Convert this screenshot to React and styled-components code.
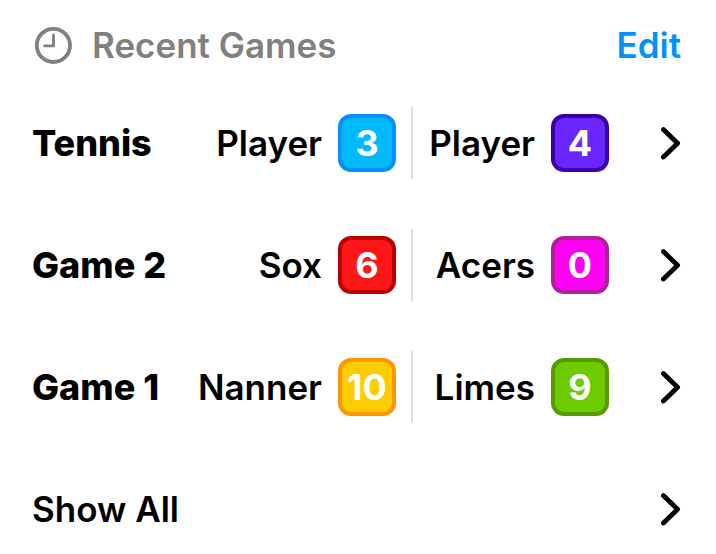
import React from 'react';
import styled, { createGlobalStyle } from 'styled-components';

const games = [
  {
    name: 'Tennis',
    home: { name: 'Player', score: 3, fill: '#00b9ff', edge: '#0091ff' },
    away: { name: 'Player', score: 4, fill: '#6b26ff', edge: '#3700a8' },
  },
  {
    name: 'Game 2',
    home: { name: 'Sox', score: 6, fill: '#ff1717', edge: '#b80000' },
    away: { name: 'Acers', score: 0, fill: '#ff00f2', edge: '#b0209a' },
  },
  {
    name: 'Game 1',
    home: { name: 'Nanner', score: 10, fill: '#ffcc00', edge: '#ff9500' },
    away: { name: 'Limes', score: 9, fill: '#6ecb00', edge: '#559b00' },
  },
];

function ClockIcon() {
  return (
    <svg width="40" height="40" viewBox="0 0 40 40" fill="none" aria-hidden="true">
      <circle cx="21.4" cy="20.4" r="16.6" stroke="currentColor" strokeWidth="3.8" />
      <path
        d="M21.5 9.9V20.9H12.7"
        stroke="currentColor"
        strokeWidth="2.8"
        strokeLinecap="round"
        strokeLinejoin="round"
      />
    </svg>
  );
}

function Chevron() {
  return (
    <svg width="20" height="34" viewBox="0 0 20 34" fill="none" aria-hidden="true">
      <path
        d="M2.4 3.6L16.6 17.3L2.4 31"
        stroke="currentColor"
        strokeWidth="4.8"
        strokeLinecap="round"
        strokeLinejoin="round"
      />
    </svg>
  );
}

function TeamScore({ team }) {
  return (
    <Team>
      {team.name}
      <Score $fill={team.fill} $edge={team.edge}>
        {team.score}
      </Score>
    </Team>
  );
}

function App() {
  return (
    <>
      <GlobalStyle />
      <Page>
        <Header>
          <ClockIcon />
          <Title>Recent Games</Title>
          <EditButton type="button">Edit</EditButton>
        </Header>
        <List>
          {games.map(game => (
            <li key={game.name}>
              <Row type="button">
                <GameName>{game.name}</GameName>
                <Matchup>
                  <TeamScore team={game.home} />
                  <Divider />
                  <TeamScore team={game.away} />
                </Matchup>
                <Chevron />
              </Row>
            </li>
          ))}
          <li>
            <Row type="button">
              Show All
              <Chevron />
            </Row>
          </li>
        </List>
      </Page>
    </>
  );
}

const GlobalStyle = createGlobalStyle`
  * {
    box-sizing: border-box;
  }
  body {
    margin: 0;
    background: #fff;
    color: #000;
    font-family: Inter, 'Liberation Sans', sans-serif;
    font-size: 35px;
    font-weight: 600;
    line-height: 44px;
  }
  button {
    margin: 0;
    padding: 0;
    border: 0;
    background: none;
    color: inherit;
    font: inherit;
    cursor: pointer;
  }
`;

const Page = styled.main`
  padding: 9px 35px 8px 32px;
`;

const Header = styled.header`
  display: flex;
  align-items: center;
  height: 72px;
  margin-bottom: 26px;
  color: #808080;
`;

const Title = styled.h1`
  flex: auto;
  margin: 0 0 0 20px;
  font-size: 35px;
  font-weight: 600;
`;

const EditButton = styled.button`
  && {
    color: #0091ff;
  }
`;

const List = styled.ul`
  display: flex;
  flex-direction: column;
  gap: 50px;
  margin: 0;
  padding: 0;
  list-style: none;
`;

const Row = styled.button`
  && {
    display: flex;
    align-items: center;
    justify-content: space-between;
    width: 100%;
    height: 72px;
    text-align: left;
    white-space: nowrap;
  }
`;

const GameName = styled.span`
  flex: auto;
  font-size: 36px;
  font-weight: 800;
`;

const Matchup = styled.span`
  display: flex;
  align-items: center;
  justify-content: flex-end;
  margin-right: 52px;
`;

const Team = styled.span`
  display: flex;
  align-items: center;
  justify-content: flex-end;
  gap: 16px;

  &:last-child {
    width: 196px;
  }
`;

const Divider = styled.span`
  width: 2px;
  height: 72px;
  margin-left: 15px;
  background: #dedede;
`;

const Score = styled.span`
  display: flex;
  align-items: center;
  justify-content: center;
  width: 58px;
  height: 58px;
  border: 4px solid ${({ $edge }) => $edge};
  border-radius: 13px;
  background: ${({ $fill }) => $fill};
  color: #fff;
  font-size: 36px;
  font-weight: 700;
`;

export default App;
